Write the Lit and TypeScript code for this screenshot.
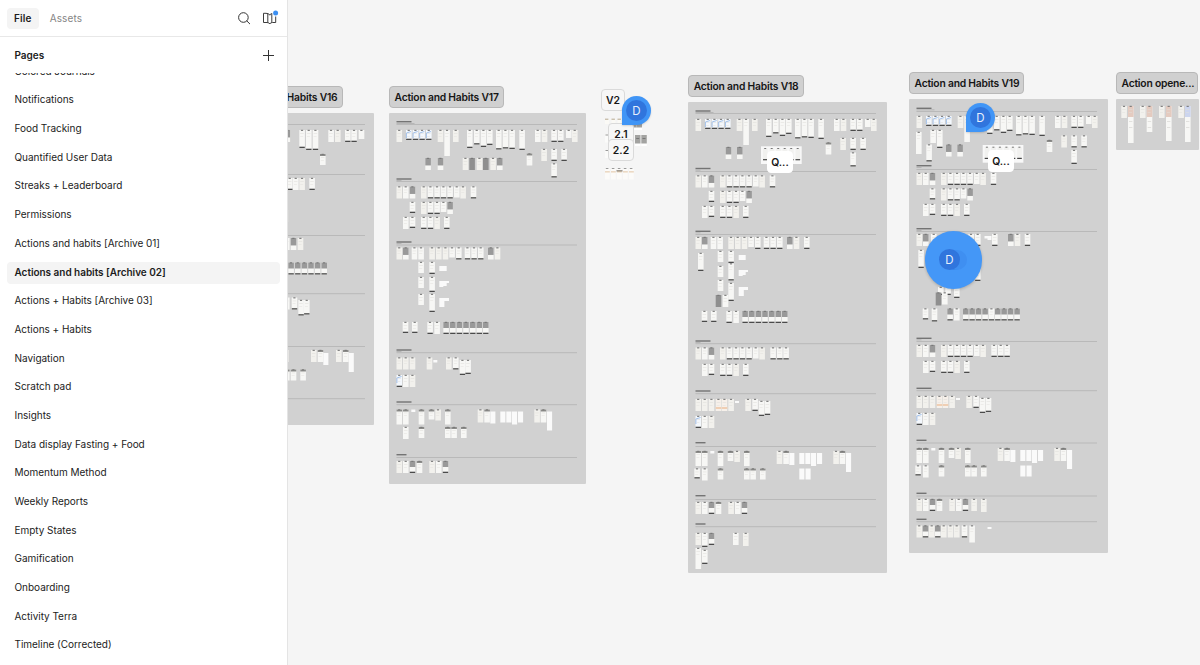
import { LitElement, css, html, svg } from 'lit'
import { customElement, property, state } from 'lit/decorators.js'

// A row is [y, tokens]; a token is x, a kind letter and an optional height.
// p plain, b beige, f footer bar, g grey top, k grey top + footer, d dark,
// t dark header, o orange, l blue, u tall blue, r tall orange, w bare
type Row = [number, string]

interface Section {
  label: number
  line: number
}

interface Board {
  title: string
  x: number
  y: number
  w: number
  h: number
  tag: number
  tagWidth: number
  sections: Section[]
  rows: Row[]
  groups?: [number, number][]
}

const PAGES = [
  'Colored Journals',
  'Notifications',
  'Food Tracking',
  'Quantified User Data',
  'Streaks + Leaderboard',
  'Permissions',
  'Actions and habits [Archive 01]',
  'Actions and habits [Archive 02]',
  'Actions + Habits [Archive 03]',
  'Actions + Habits',
  'Navigation',
  'Scratch pad',
  'Insights',
  'Data display Fasting + Food',
  'Momentum Method',
  'Weekly Reports',
  'Empty States',
  'Gamification',
  'Onboarding',
  'Activity Terra',
  'Timeline (Corrected)',
]

const INTRO = '7.5b 17l10 23.7l10 30.3l10 37l10 48.7b 55.3p26 64b 78f18 85f14.5 91.7f17 98f15 107f19.5 113.7f18.5 120.3f19 130.3f20 146p 152.7b 162.3f 169f 177p8 183b'
const INTRO_SIDE: Row[] = [[36, '152.3b 162.3f 172.3f'], [40.5, '137.7t12'], [50.5, '162.3f14']]
const STEPS = '7.5b 14p 20.7g 32b 38.7f 45.3f 51.7f 58.3f 65p11 71.3b'
const STEPS_2 = '20.7f11 32b 38.7f 45.3f 51.7p10 58.3g'
const STEPS_3 = '14p 20.7f11 32f 38.7f 45.3b 55f'
const DETAIL = '7.5b 14g 22.7p 29.3p 40.3b 47b 53.7b 60.3p10 67f 75.7f 82.3f 89f 99g 105.7b'
const DETAIL_END = '13.7f11 23f11 38.3f 45.3p 54.3k 61k 67.6k 74.2k 81k 87.5k 94k'
const TIMELINE: Row[] = [
  [0, '7.5t15 14t15 22.3w2.5 29.7t15 39.7t10 46.3b11 56t15 88.7b13 95.3t13 145.3b13 151.7t13'],
  [2, '101.3w12 111.3w11 117.3w11 123w13 129w11 158w19'],
]
const TIMELINE_2 = '14p 29.7t11 56t11 62.3t11 72t11'
const TIMELINE_END = '7.5b 14p 20.7k 27.7t12 40.3b 47p 53.7k'

const shift = (rows: Row[], dy: number): Row[] => rows.map(([y, t]) => [y + dy, t])

const BOARDS: Board[] = [
  {
    title: 'Action and Habits V16', x: 177, y: 113, w: 197, h: 312, tag: 86, tagWidth: 166,
    sections: [
      { label: 8, line: 11 }, { label: 58, line: 61.3 }, { label: 119, line: 122 },
      { label: 177, line: 180.5 }, { label: 230, line: 233 }, { label: 282, line: 285.5 },
    ],
    rows: [
      [17, '107.5g 122.3f18 129f20 135.7f20 151.3p 158b 168f 174.3f 181.7p9'],
      [41, '143t11'],
      [65, '110f 116p 122.3b 132.3f'],
      [97, '105.5f'],
      [125, '107p 113.7g 120.7b'],
      [149.5, '111.3k 118k 124.6k 131.2k 137.8k 144.4k'],
      [184.5, '107p 114.7f'],
      [187, '121.3f15.5 127f14.5'],
      [237, '106b 134b 140.7t 159b 166t'],
      [240, '146.3w12 171.7w19'],
      [256.5, '107t11 113.7t11 123.3t11'],
    ],
  },
  {
    title: 'Action and Habits V17', x: 389, y: 113, w: 197, h: 371, tag: 86, tagWidth: 115,
    sections: [
      { label: 8.7, line: 11 }, { label: 66, line: 68.3 }, { label: 129, line: 131.7 },
      { label: 237, line: 239.5 }, { label: 289, line: 291.5 }, { label: 341.7, line: 344.3 },
    ],
    rows: [
      [17, INTRO],
      ...INTRO_SIDE,
      [45, '36.3g 48.7g 73.7b 80.3d 87.7b 94d 101.3b 108g'],
      [73.5, STEPS + ' 81.7f'],
      [89, STEPS_2],
      [104, STEPS_3],
      [134.5, DETAIL],
      [149, '29.3p11 40.3f12'],
      [153, '50.3w5 53.7w5'],
      [164, '29.3p11 40.3f15'],
      [168, '50.3w6 53.7w5 56w2'],
      [181, '29.3p11 40.3f18'],
      [185, '50.3w9 53.7w3 56w3'],
      [209, DETAIL_END],
      [244.5, '7.5b 14b 20.7b 37.7b 57b 64f'],
      [247, '44.3w2.5 70.7f15 76.3f14'],
      [262, '7.5l12 14p 20.7b'],
      ...shift(TIMELINE, 296.5),
      [314, TIMELINE_2],
      [348, TIMELINE_END],
    ],
  },
  {
    title: 'Action and Habits V18', x: 688, y: 102, w: 199, h: 471, tag: 75, tagWidth: 116,
    sections: [
      { label: 9, line: 11.3 }, { label: 66.5, line: 69.3 }, { label: 129.3, line: 132.3 },
      { label: 239, line: 241.5 }, { label: 289, line: 291.5 }, { label: 340.7, line: 344 },
      { label: 393.7, line: 397 }, { label: 422, line: 424.5 },
    ],
    groups: [[73, 44.3]],
    rows: [
      [17, INTRO],
      ...INTRO_SIDE,
      [45, '37.7g 49g'],
      [73.5, STEPS + ' 81.7f'],
      [89, STEPS_2],
      [104, STEPS_3],
      [135, DETAIL + ' 116f'],
      [151, '10f18'],
      [149, '29.7p11 40.3f12'],
      [153, '50.7w5 53.7w5'],
      [161.5, '40.3f17'],
      [164, '29.7p11'],
      [168, '50.7w6 53.7w5 56w2'],
      [178, '29.7p11'],
      [181, '40.3f18'],
      [185, '50.7w9 53.7w3 56w3'],
      [193, '27.7d12 34.7p12'],
      [209, DETAIL_END],
      [245.5, STEPS + ' 82.3f 89f 95.3f'],
      [262, STEPS_3],
      [297, '7.5b 14b 20.7b 27.7o 33.7o 40.3b 57.3b 64.3f'],
      [299, '47w2 70.7f15 76.7f14'],
      [314, '7.5l12 14p 20.7b'],
      ...shift(TIMELINE, 349),
      [366.5, '6.3f10 ' + TIMELINE_2 + ' 111.3w11 117.5w11'],
      [400, TIMELINE_END],
      [431, '7.5b 14f14 20.7k 45p 55b13'],
      [446, '7.5p21'],
      [448, '14f14'],
    ],
  },
  {
    title: 'Action and Habits V19', x: 909, y: 99, w: 199, h: 454, tag: 72, tagWidth: 115,
    sections: [
      { label: 9.3, line: 12 }, { label: 66.7, line: 70.3 }, { label: 129.7, line: 132.3 },
      { label: 239.3, line: 242.3 }, { label: 289.3, line: 291.5 }, { label: 341.3, line: 343.7 },
      { label: 394.3, line: 396.7 }, { label: 420.3, line: 422.5 },
    ],
    groups: [[73.7, 46]],
    rows: [
      [17, INTRO],
      ...shift(INTRO_SIDE, 0.5),
      [31, '21.3p13 28f18'],
      [33, '7p22'],
      [45.5, '17.3f17 37g 48.3g'],
      [74, STEPS + ' 81.7f'],
      [89.5, STEPS_2],
      [105, STEPS_3],
      [135, '7.5b 14g 22p 59.3p 66f 83f 99g 105.7b 115.7f'],
      [137, '75.5w2.5 78.5w4'],
      [151, '9.3f18'],
      [170, '66f12'],
      [188, '29f8 36.3f8 45f11'],
      [193.5, '26.7d13 33p12'],
      [209.5, '13.7f11 22.7f13 38.3k 45p 54k 60.3k 66.7k 73.3k 79.7f 86k 92.3k 98.7k 105.3k'],
      [246, STEPS + ' 82.3f 89f 95.3f'],
      [262, STEPS_3],
      [297, '7.5b 14b 20.7b 27.7o 33.7o 40.3b 57.3b 64.3f'],
      [299, '47w2 70.7f15 76.7f14'],
      [314, '7.5l12 14p 20.7b'],
      ...shift(TIMELINE, 349),
      [366.5, '6.3f10 ' + TIMELINE_2 + ' 111.3w11 117.5w11'],
      [400, TIMELINE_END + ' 62.3b 72b13'],
      [426.5, '7.5b 13.7k 20b 26k 32b 38.7b 45b 52.7f 60.3p17'],
      [428, '78.5w2'],
    ],
  },
  {
    title: 'Action opene...', x: 1116, y: 99, w: 83, h: 51, tag: 72, tagWidth: 82,
    sections: [],
    rows: [[7, '5.3b 12r37 24b 30.7r26 43b 50r35 62.3b 69u36']],
  },
]

const FILL: Record<string, string> = {
  b: '#f2f1ed', d: '#8f8f8f', l: '#f4f8fd', o: '#f6f0ea', w: '#fafafa',
}

function mockup(token: string, y: number) {
  const m = /^([\d.]+)([a-z])([\d.]*)$/.exec(token)
  if (!m) return null
  const x = Number(m[1])
  const kind = m[2]
  const h = m[3] ? Number(m[3]) : 12
  const w = h < 7 ? 4 : kind === 'w' ? 5.1 : 5.6
  const footer = 'fkl'.includes(kind)
  return svg`
    <rect x=${x} y=${y} width=${w} height=${h} fill=${FILL[kind] ?? '#f7f7f5'} />
    ${kind === 'g' || kind === 'k' ? svg`<rect x=${x} y=${y} width=${w} height=${h * (kind === 'g' ? 0.62 : 0.5)} fill="#999" />` : null}
    ${kind === 't' ? svg`<rect x=${x} y=${y} width=${w} height="2" fill="#8c8c8a" />` : null}
    ${kind === 'r' || kind === 'u' ? svg`
      <rect x=${x} y=${y} width=${w} height="11" fill=${kind === 'r' ? '#e4cbc0' : '#ccd5ee'} />
      <rect x=${x + 1} y=${y + 15} width="3.4" height="0.7" fill="#d9d7d5" />
      <rect x=${x + 1} y=${y + 21} width="3.4" height="0.7" fill="#d9d7d5" />` : null}
    ${kind === 'l' ? svg`<path d=${`M${x + 0.4} ${y + 8}V${y + 3}L${x + 5} ${y + 1.5}`} fill="none" stroke="#98bae6" stroke-width="0.9" />` : null}
    ${kind === 'o' ? svg`<rect x=${x} y=${y + 8} width=${w} height="2" fill="#f0cfb4" />` : null}
    ${kind !== 'w' ? svg`<rect x=${x + 1.6} y=${y - 0.2} width="2.2" height="1.1" fill="#777" />` : null}
    ${h > 9 && !'wdgk'.includes(kind) ? svg`
      <rect x=${x + 0.9} y=${y + 3.2} width="3.6" height="0.5" fill="#dfddd8" />
      <rect x=${x + 0.9} y=${y + 6} width="3" height="0.5" fill="#e3e1dd" />` : null}
    ${footer ? svg`<rect x=${x + 0.1} y=${y + h - 1.3} width=${w - 0.2} height="1.3" fill="#4a4a4a" />` : null}
  `
}

const mockups = (rows: Row[]) => rows.map(([y, tokens]) => tokens.split(' ').map(t => mockup(t, y)))

@customElement('page-sidebar')
export class PageSidebar extends LitElement {
  @state() private selected = 7

  static styles = css`
    :host {
      display: flex;
      flex-direction: column;
      box-sizing: border-box;
      width: 288px;
      height: 665px;
      background: #fff;
      border-right: 1px solid #e4e4e4;
      color: #1c1c1c;
      font: 400 10px/16px Inter, sans-serif;
      letter-spacing: -0.03px;
    }
    .tabs {
      display: flex;
      align-items: center;
      box-sizing: border-box;
      height: 37px;
      padding: 0 8px 0 7px;
      border-bottom: 1px solid #e8e8e8;
    }
    .tab {
      padding: 3px 7px 4px;
      border-radius: 4px;
      color: #858585;
      line-height: 14px;
      letter-spacing: 0.15px;
    }
    .tab.active {
      margin-right: 4px;
      background: #f4f4f4;
      color: #1c1c1c;
      font-weight: 600;
    }
    .spacer {
      flex: 1;
    }
    svg {
      display: block;
      fill: none;
      stroke: #333;
    }
    .search {
      margin-right: 11px;
    }
    .heading {
      display: flex;
      align-items: center;
      justify-content: space-between;
      box-sizing: border-box;
      height: 36px;
      padding: 0 12px 1px 14.5px;
      font-weight: 600;
    }
    .add {
      margin-top: 2px;
    }
    .list {
      flex: 1;
      overflow: hidden;
    }
    .scroll {
      display: flex;
      flex-direction: column;
      gap: 6.69px;
      margin-top: -12.3px;
    }
    .page {
      box-sizing: border-box;
      height: 22px;
      flex: none;
      margin: 0 7px;
      padding: 0 7.5px;
      border-radius: 4px;
      line-height: 20px;
      white-space: nowrap;
    }
    .page.active {
      background: #f4f4f4;
      font-weight: 600;
    }
  `

  render() {
    return html`
      <div class="tabs">
        <span class="tab active">File</span>
        <span class="tab">Assets</span>
        <span class="spacer"></span>
        <svg class="search" width="14" height="14" viewBox="0 0 14 14">
          <circle cx="6.4" cy="6.5" r="4.8" />
          <path d="M9.9 10l2.8 2.8" stroke-linecap="round" />
        </svg>
        <svg width="17" height="16" viewBox="0 0 17 16">
          <path d="M9.6 3.6Q7.9 4.2 7.8 5.2Q7.2 3.3 4 3.3H1.5V12.5H5Q7.3 12.5 7.8 14Q8.3 12.5 10.4 12.5H13.7V6.5M5.8 3.7V12.3M9.8 3.3V12.3" stroke-linejoin="round" stroke-width="0.95" />
          <circle cx="13.6" cy="3" r="2.5" fill="#3d90f2" stroke="none" />
        </svg>
      </div>
      <div class="heading">
        Pages
        <svg class="add" width="13" height="13" viewBox="0 0 13 13"><path d="M6.5 1v11M1 6.5h11" /></svg>
      </div>
      <div class="list">
        <div class="scroll">
          ${PAGES.map((name, i) => html`
            <div class="page ${i === this.selected ? 'active' : ''}" @click=${() => { this.selected = i }}>${name}</div>
          `)}
        </div>
      </div>
    `
  }
}

@customElement('canvas-board')
export class CanvasBoard extends LitElement {
  @property({ attribute: false }) board!: Board

  static styles = css`
    :host {
      display: block;
    }
    .board {
      position: absolute;
      background: #d1d1d1;
      border-radius: 1px;
    }
    svg {
      display: block;
    }
    .title {
      position: absolute;
      box-sizing: border-box;
      height: 22px;
      padding: 0 4.5px;
      border: 1px solid #b8b8b8;
      border-radius: 4px;
      background: #d0d0d0;
      color: #161616;
      font: 600 10.3px/21px Inter, sans-serif;
      letter-spacing: -0.2px;
      text-align: right;
      white-space: nowrap;
    }
  `

  render() {
    const b = this.board
    return html`
      <div class="title" style="left: ${b.x}px; top: ${b.tag}px; width: ${b.tagWidth}px;">${b.title}</div>
      <div class="board" style="left: ${b.x}px; top: ${b.y}px; width: ${b.w}px; height: ${b.h}px;">
        <svg width=${b.w} height=${b.h}>
          ${b.sections.map((s, i) => svg`
            <rect x="7.5" y=${s.label - 0.7} width=${i < 5 ? 15 : 10} height="1.4" fill="#747474" />
            ${i < 4 ? svg`<rect x="7.5" y=${s.label + 1.3} width=${i ? 5 : 18} height="0.6" fill="#a3a3a3" />` : null}
            <rect x="7.5" y=${s.line} width="180.5" height="0.6" fill="#a9a9a9" />
          `)}
          ${(b.groups ?? []).map(([x, y]) => svg`
            <rect x=${x} y=${y} width="40.7" height="17.7" fill="#f8f8f8" />
            ${[0, 1, 2, 3, 4, 5].map(n => svg`
              <rect x=${x + 2 + n * 6.5} y=${y + 2} width="4.6" height="12" fill="#f1f1ef" />
              <rect x=${x + 3.2 + n * 6.5} y=${y + 1.7} width="2" height="1" fill="#777" />
              <rect x=${x + 2 + n * 6.5} y=${y + 12.8} width="4.6" height="1.2" fill="#444" />
            `)}
          `)}
          ${mockups(b.rows)}
        </svg>
      </div>
    `
  }
}

@customElement('app-root')
export class AppRoot extends LitElement {
  static styles = css`
    :host {
      display: flex;
      position: relative;
      width: 1200px;
      height: 665px;
      overflow: hidden;
      background: #f5f5f5;
      font-family: Inter, sans-serif;
    }
    page-sidebar {
      position: relative;
      z-index: 1;
    }
    .canvas {
      position: absolute;
      inset: 0;
      overflow: hidden;
    }
    .stray {
      position: absolute;
      left: 600px;
      top: 112px;
    }
    .tag {
      position: absolute;
      box-sizing: border-box;
      height: 22px;
      border: 1px solid #dadada;
      border-radius: 4px;
      background: #f7f7f7;
      color: #161616;
      font-size: 10.4px;
      font-weight: 600;
      line-height: 21px;
      text-align: center;
    }
    .tag.plain {
      border-color: #fff;
      background: #fff;
    }
    .pin {
      position: absolute;
      display: grid;
      place-items: center;
      width: 29px;
      height: 29px;
      border-radius: 50% 50% 50% 0;
      background: #4095f6;
      box-shadow: 0 1px 2px rgba(0, 0, 0, 0.15);
    }
    .face {
      width: 21px;
      height: 21px;
      border-radius: 50%;
      background: #3075dd;
      color: #e6effc;
      font-size: 11.5px;
      font-weight: 400;
      line-height: 22px;
      text-align: center;
    }
    .cluster {
      position: absolute;
      left: 924.5px;
      top: 231px;
      display: flex;
      align-items: center;
      box-sizing: border-box;
      width: 57.5px;
      height: 57.5px;
      padding-left: 14.5px;
      border-radius: 50%;
      background: #4497f7;
      box-shadow: 0 1px 3px rgba(0, 0, 0, 0.2);
    }
    .cluster .face {
      z-index: 1;
    }
    .behind {
      width: 20px;
      height: 20px;
      margin-left: -13.5px;
      border-radius: 50%;
      background: #3f8ff1;
      box-shadow: -3px 0 0 #3784e8;
    }
  `

  render() {
    return html`
      <page-sidebar></page-sidebar>
      <div class="canvas">
        ${BOARDS.map(b => html`<canvas-board .board=${b}></canvas-board>`)}
        <svg class="stray" width="60" height="75">
          ${[5, 11.5, 17.5, 24].map(x => svg`
            <rect x=${x} y="7" width="4" height="5" fill="#fbfaf6" />
            <rect x=${x} y="6.7" width="3.4" height="1" fill="#b5a78f" />
          `)}
          ${[22.5, 38].map(y => svg`
            <rect x="5" y=${y} width="4" height="8" fill="#fbfbfa" />
            <rect x="5.5" y=${y} width="2.6" height="1" fill="#999" />
          `)}
          ${[[32, 7], [36.5, 7], [35, 23], [41.3, 23]].map(([x, y]) => svg`
            <rect x=${x} y=${y} width="5.5" height="11" fill="#fff" />
            <rect x=${x} y=${y} width="5.5" height="8.5" fill="#a3a3a1" />
            <rect x=${x + 1.2} y=${y + 3} width="3" height="1" fill="#777" />
          `)}
          ${[5, 11, 17, 23, 29].map(x => svg`
            <rect x=${x} y="56.5" width="4.8" height="11" fill="#fcfbf9" />
            <rect x=${x + 0.8} y="56" width="2.6" height="1" fill="#999" />
            <rect x=${x} y="59" width="4.8" height="1.6" fill="#ecd9c4" />
          `)}
          <rect x="16.5" y="58.3" width="6" height="1.1" fill="#7c7468" />
        </svg>
        <div class="tag" style="left: 601px; top: 89px; width: 24px;">V2</div>
        <div class="tag" style="left: 608px; top: 123px; width: 26px;">2.1</div>
        <div class="tag" style="left: 608px; top: 139px; width: 26px;">2.2</div>
        <div class="tag plain" style="left: 767px; top: 151px; width: 26px;">Q...</div>
        <div class="tag plain" style="left: 988px; top: 150px; width: 26px;">Q...</div>
        <div class="pin" style="left: 622px; top: 96px;"><span class="face">D</span></div>
        <div class="pin" style="left: 966px; top: 103px;"><span class="face">D</span></div>
        <div class="cluster"><span class="face">D</span><span class="behind"></span></div>
      </div>
    `
  }
}

declare global {
  interface HTMLElementTagNameMap {
    'app-root': AppRoot
    'canvas-board': CanvasBoard
    'page-sidebar': PageSidebar
  }
}
